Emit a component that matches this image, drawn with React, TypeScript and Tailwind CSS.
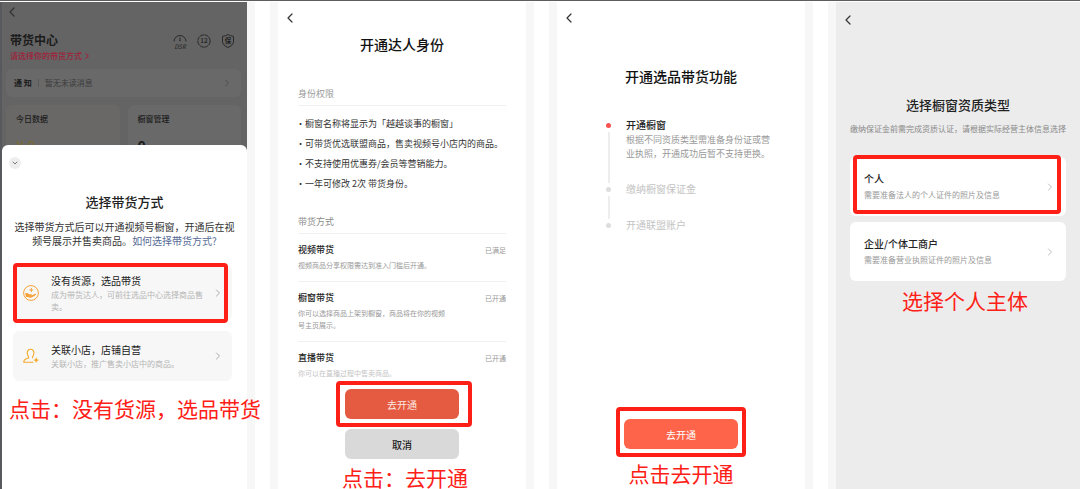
import type { ReactNode } from "react";
import { clsx } from "clsx";
import { ChevronDown, ChevronLeft, ChevronRight } from "lucide-react";

/** 红色标注文字 */
function Note({ children, className }: { children: ReactNode; className?: string }) {
  return (
    <p className={clsx("whitespace-nowrap text-[21px] leading-6 text-[#fe2016]", className)}>
      {children}
    </p>
  );
}

/** 红色标注框，盖在按钮或卡片上 */
function Mark({ className }: { className: string }) {
  return <span className={clsx("pointer-events-none absolute rounded-sm border-4 border-[#fe2016]", className)} />;
}

/** 列之间的留白 */
function Gutter() {
  return <div className="border-x-8 border-[#f7f7f7] bg-white" />;
}

function BackButton({ className }: { className?: string }) {
  return (
    <button type="button" aria-label="返回" className={clsx("block text-[#333]", className)}>
      <ChevronLeft className="-ml-1 size-4" strokeWidth={1.8} />
    </button>
  );
}

function DsrIcon() {
  return (
    <svg viewBox="0 0 14 16" className="h-4 w-3.5" fill="none" stroke="#222" strokeWidth="0.9">
      <path d="M1 7.5A6 6 0 0 1 13 7.5M7 3.5v3" />
      <circle cx="7" cy="6.6" r="0.7" fill="#222" stroke="none" />
      <text x="7" y="14.5" textAnchor="middle" fontSize="6" fontStyle="italic" fill="#222" stroke="none">
        DSR
      </text>
    </svg>
  );
}

function TwelveIcon() {
  return (
    <svg viewBox="0 0 14 14" className="size-3.5" fill="none" stroke="#222" strokeWidth="0.9">
      <circle cx="7" cy="7" r="6.2" strokeDasharray="4.4 0.47" />
      <text x="7" y="9.4" textAnchor="middle" fontSize="6.5" fontWeight="500" fill="#222" stroke="none">
        12
      </text>
    </svg>
  );
}

function GuardIcon() {
  return (
    <svg viewBox="0 0 14 14" className="size-3.5" fill="none" stroke="#222" strokeWidth="0.9">
      <path d="M7 0.6c1.6 1 3.4 1.5 5.5 1.7v5c0 3-2.3 4.8-5.5 6.2c-3.2-1.4-5.5-3.2-5.5-6.2v-5c2.1-.2 3.9-.7 5.5-1.7z" />
      <text x="7" y="9.3" textAnchor="middle" fontSize="6.5" fontWeight="700" fill="#222" stroke="none">
        保
      </text>
    </svg>
  );
}

function HandIcon() {
  return (
    <svg viewBox="0 0 16 16" className="size-4 shrink-0" fill="none" stroke="#f5a137">
      <circle cx="8" cy="8" r="7.4" strokeWidth="1" />
      <path d="M8.3 3v4M6.3 5h4" strokeWidth="1" />
      <path
        d="M2.2 8.4c1.5-.7 2.8-.3 3.8.8h2.2c.9 0 .9 1.2 0 1.2h-1.4h1.8l3.4-1.6c1-.3 1.4.7.7 1.2l-3.5 2.3c-1.5.8-3 .4-4.2-.3h-2z"
        fill="#f5a137"
        stroke="none"
      />
    </svg>
  );
}

function PersonIcon() {
  return (
    <svg viewBox="0 0 16 16" className="size-4 shrink-0" fill="none" stroke="#f5a928" strokeWidth="1.1">
      <path d="M10.5 14.3H.8c-.2-1.9.5-2.6 2-3.2l2.5-1c.6-.4.5-1 .1-1.6C3.2 5.2 4.3 1.2 7.6 1.2s4.4 4 2.2 7.3c-.4.6-.4 1.2.2 1.6" />
      <path
        d="M13.2 9.3q.4 2.4 2.8 2.8q-2.4.4-2.8 2.8q-.4-2.4-2.8-2.8q2.4-.4 2.8-2.8z"
        fill="#f5a928"
        stroke="none"
      />
    </svg>
  );
}

interface SourceCardProps {
  icon: ReactNode;
  title: string;
  desc: string;
  marked?: boolean;
}

function SourceCard({ icon, title, desc, marked }: SourceCardProps) {
  return (
    <button
      type="button"
      className={clsx(
        "relative flex w-full items-center rounded-md bg-[#f7f7f7] pl-2.5 pr-2 text-left",
        marked ? "h-14" : "h-[50px]"
      )}
    >
      {icon}
      <span className="ml-3 flex-1">
        <span className="block text-[10px] leading-4 text-[#222]">{title}</span>
        <span className="block text-[8px] leading-3 text-[#b5b5b5]">{desc}</span>
      </span>
      <ChevronRight className="ml-2 size-3 text-[#aaa]" strokeWidth={2} />
      {marked && <Mark className="-inset-y-0.5 left-0 right-1" />}
    </button>
  );
}

/** 第一步：选择带货方式 */
function SourceScreen() {
  return (
    <section className="flex min-w-0 flex-col border-l-2 border-[#58595c] bg-[#646464]">
      <div className="h-[143px] shrink-0 overflow-hidden text-[#1c1c1c]">
        <BackButton className="ml-1.5 mt-0.5" />
        <header className="mt-3 flex justify-between pl-2 pr-3">
          <div>
            <h2 className="text-[12px] font-bold leading-4">带货中心</h2>
            <a href="#" className="mt-0.5 flex items-center text-[8px] font-medium leading-3 text-[#a01f3b]">
              请选择你的带货方式
              <ChevronRight className="size-2.5" strokeWidth={2.5} />
            </a>
          </div>
          <div className="flex gap-2.5 pt-0.5">
            <DsrIcon />
            <TwelveIcon />
            <GuardIcon />
          </div>
        </header>
        <div className="ml-1 mr-1.5 mt-[7px] flex h-7 items-center rounded-md bg-[#696969] px-2 text-[8px]">
          <b>通 知</b>
          <span className="mx-1.5 h-2 w-px bg-[#5a5a5a]" />
          <span className="flex-1 text-[#3b3b3b]">暂无未读消息</span>
          <ChevronRight className="size-3 text-[#444]" strokeWidth={1.5} />
        </div>
        <div className="ml-1 mr-1.5 mt-2 grid grid-cols-2 gap-2">
          <div className="rounded-t-md bg-[#696866] px-2.5 pt-2">
            <h3 className="text-[8px] font-medium leading-3">今日数据</h3>
            <p className="mt-2.5 text-[14px] font-medium leading-5 text-[#7a6a35]">¥ 0</p>
          </div>
          <div className="rounded-t-md bg-[#696969] px-2.5 pt-2">
            <h3 className="text-[8px] font-medium leading-3">橱窗管理</h3>
            <p className="mt-2.5 text-[14px] font-bold leading-5">0</p>
          </div>
        </div>
      </div>
      <div className="flex-1 rounded-t-md bg-white px-[11px]">
        <button
          type="button"
          aria-label="收起"
          className="-ml-1 mt-3 flex size-3 items-center justify-center rounded-full bg-[#eee] text-[#777]"
        >
          <ChevronDown className="size-2" strokeWidth={3} />
        </button>
        <h2 className="mt-[23px] text-center text-[13px] font-medium leading-5 text-[#222]">选择带货方式</h2>
        <p className="mt-2 text-center text-[10px] leading-3.5 text-[#333]">
          选择带货方式后可以开通视频号橱窗，开通后在视频号展示并售卖商品。
          <a href="#" className="text-[#576b95]">
            如何选择带货方式?
          </a>
        </p>
        <div className="mr-1 mt-[17px] space-y-2.5">
          <SourceCard
            icon={<HandIcon />}
            title="没有货源，选品带货"
            desc="成为带货达人，可前往选品中心选择商品售卖。"
            marked
          />
          <SourceCard icon={<PersonIcon />} title="关联小店，店铺自营" desc="关联小店，推广售卖小店中的商品。" />
        </div>
        <Note className="relative -ml-1 mt-[15px]">点击：没有货源，选品带货</Note>
      </div>
    </section>
  );
}

const RIGHTS = [
  "橱窗名称将显示为「越越谈事的橱窗」",
  "可带货优选联盟商品，售卖视频号小店内的商品。",
  "不支持使用优惠券/会员等营销能力。",
  "一年可修改 2次 带货身份。",
];

const METHODS = [
  { name: "视频带货", desc: "视频商品分享权限需达到准入门槛后开通。", status: "已满足" },
  { name: "橱窗带货", desc: "你可以选择商品上架到橱窗，商品将在你的视频号主页展示。", status: "已开通" },
  { name: "直播带货", desc: "你可以在直播过程中售卖商品。", status: "已开通", faded: true },
];

/** 第二步：开通达人身份 */
function IdentityScreen() {
  return (
    <section className="min-w-0 bg-white">
      <BackButton className="ml-2 mt-2" />
      <h2 className="mt-2 text-center text-[14px] font-medium leading-5 text-[#111]">开通达人身份</h2>
      <div className="px-5">
        <h3 className="mt-8 border-b border-[#f0f0f0] pb-[3px] text-[9px] leading-4 text-[#999]">身份权限</h3>
        <ul className="mt-2 text-[9px] leading-5 text-[#333]">
          {RIGHTS.map((text) => (
            <li key={text} className="whitespace-nowrap">
              <span className="-ml-0.5 inline-block w-[9px]">·</span>
              {text}
            </li>
          ))}
        </ul>
        <h3 className="mt-5 border-b border-[#f0f0f0] pb-[3px] text-[9px] leading-4 text-[#8a8a8a]">带货方式</h3>
        <ul className="divide-y divide-[#f0f0f0]">
          {METHODS.map((m) => (
            <li key={m.name} className="pb-2.5 pt-2">
              <div className="flex items-center justify-between leading-4">
                <b className="text-[9px] font-medium text-[#222]">{m.name}</b>
                <span className="text-[7px] text-[#999]">{m.status}</span>
              </div>
              <p className={clsx("mt-px w-[150px] text-[7px] leading-3", m.faded ? "text-[#c4c4c4]" : "text-[#999]")}>
                {m.desc}
              </p>
            </li>
          ))}
        </ul>
      </div>
      <div className="relative mx-auto w-[114px]">
        <button type="button" className="block h-[30px] w-full rounded-md bg-[#e45b41] text-[10px] text-[#fbe6e0]">
          去开通
        </button>
        <Mark className="-bottom-2 -left-[9px] -right-[13px] -top-2" />
      </div>
      <button
        type="button"
        className="mx-auto mt-2.5 block h-[30px] w-[114px] rounded-md bg-[#d9d9d9] text-[10px] font-medium text-[#222]"
      >
        取消
      </button>
      <Note className="mt-1.5 pl-1.5 text-center">点击：去开通</Note>
    </section>
  );
}

const STEPS = [
  { name: "开通橱窗", desc: "根据不同资质类型需准备身份证或营业执照，开通成功后暂不支持更换。" },
  { name: "缴纳橱窗保证金" },
  { name: "开通联盟账户" },
];

/** 第三步：开通选品带货功能 */
function FeatureScreen() {
  return (
    <section className="flex min-w-0 flex-col bg-white">
      <BackButton className="ml-2 mt-2 self-start" />
      <h2 className="mt-10 text-center text-[14px] font-medium leading-5 text-[#111]">开通选品带货功能</h2>
      <ol className="ml-[49px] mt-[31px]">
        {STEPS.map((step, i) => (
          <li key={step.name} className="flex gap-[15px]">
            <div className="flex flex-col items-center">
              <span className={clsx("my-1.5 size-[5px] rounded-full", i === 0 ? "bg-[#fa5151]" : "bg-[#ddd]")} />
              {i < STEPS.length - 1 && <span className="-my-0.5 w-0.5 flex-1 bg-[#ededed]" />}
            </div>
            <div className="pb-5">
              <h3 className={clsx("text-[10px] leading-4", i === 0 ? "font-medium text-[#222]" : "text-[#c4c4c4]")}>
                {step.name}
              </h3>
              {step.desc && <p className="w-[145px] text-[9px] leading-3.5 text-[#999]">{step.desc}</p>}
            </div>
          </li>
        ))}
      </ol>
      <div className="relative mx-auto mt-auto w-[114px]">
        <button type="button" className="block h-[30px] w-full rounded-md bg-[#fd6449] text-[10px] text-white">
          去开通
        </button>
        <Mark className="-bottom-2 -left-2 -right-2 -top-3" />
      </div>
      <Note className="mb-1 mt-3 text-center">点击去开通</Note>
    </section>
  );
}

interface SubjectCardProps {
  title: string;
  desc: string;
  marked?: boolean;
}

function SubjectCard({ title, desc, marked }: SubjectCardProps) {
  return (
    <button
      type="button"
      className="relative flex h-[59px] w-full items-center justify-between rounded-md bg-white pl-3.5 pr-2.5 text-left"
    >
      <span>
        <span className="block text-[10px] font-medium leading-4 text-[#222]">{title}</span>
        <span className="block text-[8px] leading-4 text-[#999]">{desc}</span>
      </span>
      <ChevronRight className="size-3 text-[#b5b5b5]" strokeWidth={1.8} />
      {marked && <Mark className="-top-0.5 bottom-0.5 left-[3px] right-[5px]" />}
    </button>
  );
}

/** 第四步：选择橱窗资质类型 */
function SubjectScreen() {
  return (
    <section className="min-w-0 bg-[#ececec] px-3.5">
      <BackButton className="-ml-1.5 mt-2.5" />
      <h2 className="mt-[67px] text-center text-[13px] font-medium leading-5 text-[#222]">选择橱窗资质类型</h2>
      <p className="mt-1.5 whitespace-nowrap text-[8px] leading-4 text-[#8a8a8a]">
        缴纳保证金前需完成资质认证，请根据实际经营主体信息选择
      </p>
      <div className="mt-5 space-y-1.5">
        <SubjectCard title="个人" desc="需要准备法人的个人证件的照片及信息" marked />
        <SubjectCard title="企业/个体工商户" desc="需要准备营业执照证件的照片及信息" />
      </div>
      <Note className="mt-[7px] pl-3.5 text-center">选择个人主体</Note>
    </section>
  );
}

export default function App() {
  return (
    <main className="flex h-screen flex-col overflow-hidden bg-white font-['Noto_Sans_CJK_SC',sans-serif]">
      <div className="mb-px h-px shrink-0 bg-[#5f5c5f]" />
      <div className="grid min-h-0 flex-1 grid-cols-[247fr_31px_248fr_31px_248fr_31px_244fr]">
        <SourceScreen />
        <Gutter />
        <IdentityScreen />
        <Gutter />
        <FeatureScreen />
        <Gutter />
        <SubjectScreen />
      </div>
    </main>
  );
}
